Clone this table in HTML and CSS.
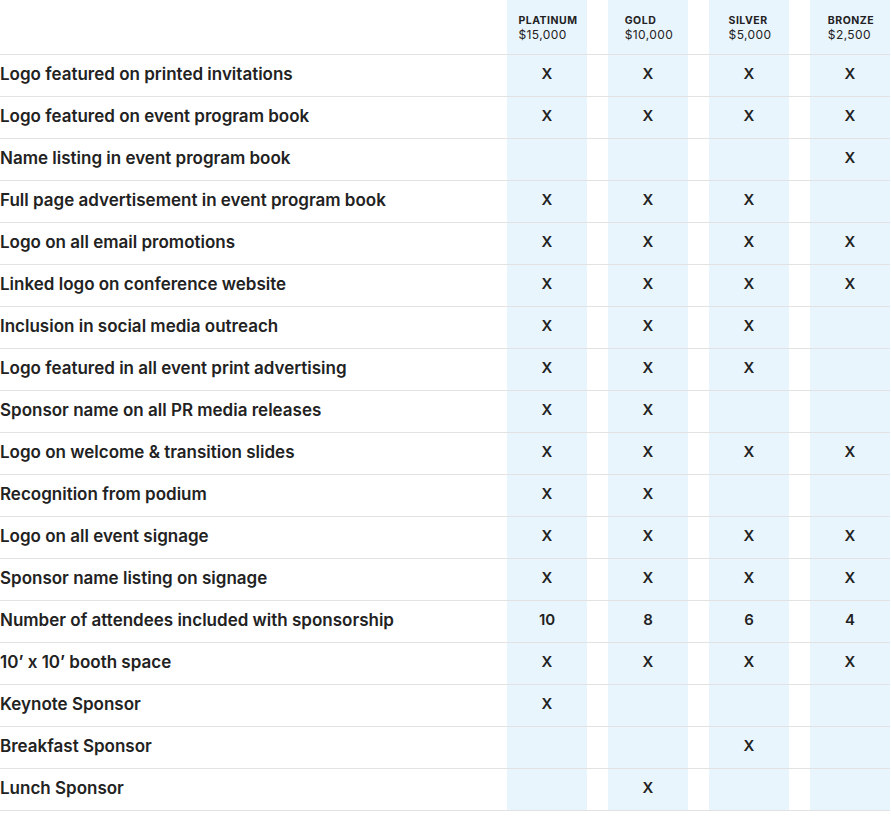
FILE: index.html
```html
<!DOCTYPE html>
<html>
<head>
<meta charset="utf-8">
<link rel="stylesheet" href="styles.css">
</head>
<body>
<div class="table">
  <div class="row head">
    <div class="label"></div>
    <div class="tier"><div class="tier-in"><div class="tname">PLATINUM</div><div class="tprice">$15,000</div></div></div>
    <div class="tier"><div class="tier-in"><div class="tname">GOLD</div><div class="tprice">$10,000</div></div></div>
    <div class="tier"><div class="tier-in"><div class="tname">SILVER</div><div class="tprice">$5,000</div></div></div>
    <div class="tier"><div class="tier-in"><div class="tname">BRONZE</div><div class="tprice">$2,500</div></div></div>
  </div>
  <div class="row"><div class="label">Logo featured on printed invitations</div><div class="cell">X</div><div class="cell">X</div><div class="cell">X</div><div class="cell">X</div></div>
  <div class="row"><div class="label">Logo featured on event program book</div><div class="cell">X</div><div class="cell">X</div><div class="cell">X</div><div class="cell">X</div></div>
  <div class="row"><div class="label">Name listing in event program book</div><div class="cell"></div><div class="cell"></div><div class="cell"></div><div class="cell">X</div></div>
  <div class="row"><div class="label">Full page advertisement in event program book</div><div class="cell">X</div><div class="cell">X</div><div class="cell">X</div><div class="cell"></div></div>
  <div class="row"><div class="label">Logo on all email promotions</div><div class="cell">X</div><div class="cell">X</div><div class="cell">X</div><div class="cell">X</div></div>
  <div class="row"><div class="label">Linked logo on conference website</div><div class="cell">X</div><div class="cell">X</div><div class="cell">X</div><div class="cell">X</div></div>
  <div class="row"><div class="label">Inclusion in social media outreach</div><div class="cell">X</div><div class="cell">X</div><div class="cell">X</div><div class="cell"></div></div>
  <div class="row"><div class="label">Logo featured in all event print advertising</div><div class="cell">X</div><div class="cell">X</div><div class="cell">X</div><div class="cell"></div></div>
  <div class="row"><div class="label">Sponsor name on all PR media releases</div><div class="cell">X</div><div class="cell">X</div><div class="cell"></div><div class="cell"></div></div>
  <div class="row"><div class="label">Logo on welcome &amp; transition slides</div><div class="cell">X</div><div class="cell">X</div><div class="cell">X</div><div class="cell">X</div></div>
  <div class="row"><div class="label">Recognition from podium</div><div class="cell">X</div><div class="cell">X</div><div class="cell"></div><div class="cell"></div></div>
  <div class="row"><div class="label">Logo on all event signage</div><div class="cell">X</div><div class="cell">X</div><div class="cell">X</div><div class="cell">X</div></div>
  <div class="row"><div class="label">Sponsor name listing on signage</div><div class="cell">X</div><div class="cell">X</div><div class="cell">X</div><div class="cell">X</div></div>
  <div class="row"><div class="label">Number of attendees included with sponsorship</div><div class="cell">10</div><div class="cell">8</div><div class="cell">6</div><div class="cell">4</div></div>
  <div class="row"><div class="label">10’ x 10’ booth space</div><div class="cell">X</div><div class="cell">X</div><div class="cell">X</div><div class="cell">X</div></div>
  <div class="row"><div class="label">Keynote Sponsor</div><div class="cell">X</div><div class="cell"></div><div class="cell"></div><div class="cell"></div></div>
  <div class="row"><div class="label">Breakfast Sponsor</div><div class="cell"></div><div class="cell"></div><div class="cell">X</div><div class="cell"></div></div>
  <div class="row"><div class="label">Lunch Sponsor</div><div class="cell"></div><div class="cell">X</div><div class="cell"></div><div class="cell"></div></div>
</div>
</body>
</html>
```

FILE: styles.css
```css
html, body {
  margin: 0;
  padding: 0;
  background: #fff;
}
body {
  font-family: "Inter", "Liberation Sans", sans-serif;
  color: #222;
}
.table {
  width: 890px;
}
.row {
  display: grid;
  grid-template-columns: 486px 80px 80px 80px 80px;
  column-gap: 21px;
  height: 41px;
  border-bottom: 1px solid #e2e2e2;
}
.row.head {
  height: 54px;
}
.label {
  display: flex;
  align-items: center;
  padding-bottom: 4px;
  font-size: 17px;
  font-weight: 600;
  letter-spacing: 0;
  white-space: nowrap;
}
.cell {
  background: #e9f5fd;
  display: flex;
  align-items: center;
  justify-content: center;
  padding-bottom: 4px;
  font-size: 15px;
  font-weight: 600;
}
.tier {
  background: #e9f5fd;
  display: flex;
  justify-content: center;
  padding-top: 14px;
}
.tier-in {
  text-align: left;
  padding-left: 2px;
}
.tname {
  font-size: 10.5px;
  font-weight: 700;
  letter-spacing: 0.5px;
  line-height: 14px;
}
.tprice {
  font-size: 12px;
  font-weight: 400;
  letter-spacing: 0.4px;
  line-height: 14px;
}
```
